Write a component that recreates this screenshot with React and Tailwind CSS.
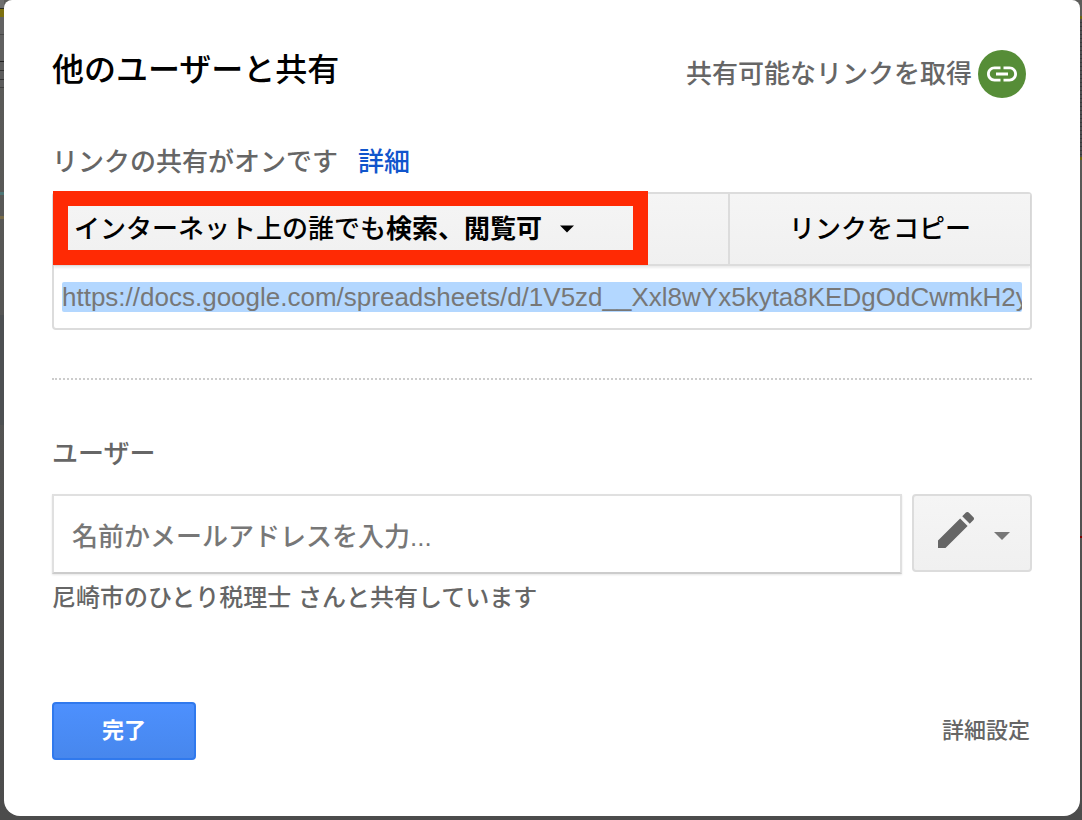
import React, { useState } from "react";

const SHARE_URL = "https://docs.google.com/spreadsheets/d/1V5zd__Xxl8wYx5kyta8KEDgOdCwmkH2yQ7";

const LinkIcon = () => (
  <svg viewBox="0 0 24 24" className="h-9 w-9" fill="currentColor" aria-hidden="true">
    <path d="M3.9 12c0-1.71 1.39-3.1 3.1-3.1h4V7H7c-2.76 0-5 2.24-5 5s2.24 5 5 5h4v-1.9H7c-1.71 0-3.1-1.39-3.1-3.1zM8 13h8v-2H8v2zm9-6h-4v1.9h4c1.71 0 3.1 1.39 3.1 3.1s-1.39 3.1-3.1 3.1h-4V17h4c2.76 0 5-2.24 5-5s-2.24-5-5-5z" />
  </svg>
);

const PencilIcon = () => (
  <svg viewBox="3 3 18 18" className="h-9 w-9" fill="currentColor" aria-hidden="true">
    <path d="M3 17.25V21h3.75L17.81 9.94l-3.75-3.75L3 17.25zM20.71 7.04c.39-.39.39-1.02 0-1.41l-2.34-2.34c-.39-.39-1.02-.39-1.41 0l-1.83 1.83 3.75 3.75 1.83-1.83z" />
  </svg>
);

const Caret = ({ className }) => (
  <svg viewBox="0 0 16 8" className={className} fill="currentColor" aria-hidden="true">
    <path d="M0 0h16L8 8z" />
  </svg>
);

// slivers of the dimmed spreadsheet on both sides of the dialog
const SheetLeft = () => (
  <div className="w-1 shrink-0" aria-hidden="true">
    <div className="h-2 bg-[#6e6e6e]" />
    <div className="h-px bg-[#2a2a22]" />
    <div className="h-2 bg-[#7d7010]" />
    <div className="h-[18px] border-b border-[#484848] bg-[#626262]" />
    <div className="h-[27px] border-b border-[#222] bg-[#606060]" />
    <div className="h-[9px] border-b border-[#333] bg-[#5c5c5c]" />
    <div className="h-[9px] border-b border-[#333] bg-[#5c5c5c]" />
    <div className="h-2 border-b border-[#404040] bg-[#5c5c5c]" />
    <div className="mt-[104px] h-[3px] bg-[#4d7575]" />
    <div className="mt-[21px] h-[3px] bg-[#776a48]" />
    <div className="mt-24 h-[110px] bg-[#4d5052]" />
  </div>
);

const SheetRight = () => (
  <div className="w-[2px] shrink-0" aria-hidden="true">
    <div className="h-4" />
    <div className="h-[3px] bg-[#6b6410]" />
    <div className="h-[138px] bg-[repeating-linear-gradient(to_bottom,#4c4c4e_0px,#4c4c4e_3px,#38383a_3px,#38383a_4px)]" />
    <div className="h-[3px] bg-[#6b6410]" />
    <div className="mt-[376px] h-[2px] bg-[#800000]" />
  </div>
);

const App = () => {
  const [people, setPeople] = useState("");

  return (
    <div
      className="flex min-h-screen items-start bg-linear-to-b from-[#5c5c5a] to-[#4c4c4c] text-[26px] leading-8 font-medium text-[#666]"
      style={{ fontFamily: '"Liberation Sans", "Noto Sans CJK JP", sans-serif' }}
    >
      <SheetLeft />
      <main className="mb-1 min-w-0 flex-1 rounded-t-lg rounded-b-2xl bg-white px-12 pt-[50px] pb-14">
        <header className="flex items-start justify-between">
          <h1 className="text-[32px] leading-10 text-black">他のユーザーと共有</h1>
          <button type="button" className="mr-[6px] flex items-center gap-[6px]">
            共有可能なリンクを取得
            <span className="flex h-12 w-12 items-center justify-center rounded-full bg-[#568d37] text-white">
              <LinkIcon />
            </span>
          </button>
        </header>

        <section className="mt-12">
          <p className="flex gap-5">
            リンクの共有がオンです
            <a href="#details" className="text-[#1155cc]">詳細</a>
          </p>

          <div className="mt-[14px] rounded-[4px] border-2 border-[#dcdcdc]">
            <div className="flex h-[72px] border-b-2 border-[#dcdcdc] bg-linear-to-b from-[#f5f5f5] to-[#f0f0f0] text-black shadow-[0_2px_2px_rgba(0,0,0,0.08)]">
              <button type="button" className="relative flex flex-1 items-center pl-5 text-left">
                <span className="absolute -top-[3px] -left-px h-[74px] w-[595px] border-[15px] border-[#ff2a04]" />
                <span>
                  インターネット上の誰でも<strong>検索、閲覧可</strong>
                </span>
                <Caret className="ml-[18px] h-2 w-[14px]" />
              </button>
              <button type="button" className="w-[302px] border-l-2 border-[#dcdcdc]">
                リンクをコピー
              </button>
            </div>
            <div className="px-2 py-4">
              <input
                type="text"
                readOnly
                aria-label="共有リンク"
                value={SHARE_URL}
                className="block h-[30px] w-full rounded-[2px] bg-[#b3d7ff] text-[#777] outline-none"
              />
            </div>
          </div>
        </section>

        <hr className="mt-12 border-t-2 border-dotted border-[#ccc]" />

        <section className="mt-[58px]">
          <label htmlFor="people" className="block">ユーザー</label>
          <div className="mt-6 flex items-start gap-[10px]">
            <input
              id="people"
              type="text"
              value={people}
              onChange={(e) => setPeople(e.target.value)}
              placeholder="名前かメールアドレスを入力..."
              className="h-20 min-w-0 flex-1 border-2 border-[#e0e0e0] border-b-[#ccc] px-[18px] pt-[6px] shadow-[0_1px_2px_rgba(0,0,0,0.1)] outline-none placeholder:text-[#777]"
            />
            <button
              type="button"
              aria-label="編集権限"
              className="flex h-[78px] w-[120px] items-start gap-5 rounded-[4px] border-2 border-[#dcdcdc] bg-linear-to-b from-[#f5f5f5] to-[#f0f0f0] pt-4 pl-6"
            >
              <PencilIcon />
              <Caret className="mt-5 h-2 w-4 text-[#777]" />
            </button>
          </div>
          <p className="mt-2 text-[24px]">尼崎市のひとり税理士 さんと共有しています</p>
        </section>

        <footer className="mt-[88px] flex items-center justify-between text-[22px]">
          <button
            type="button"
            className="h-[58px] w-36 rounded-[4px] border-2 border-[#3079ed] bg-linear-to-b from-[#4d90fe] to-[#4787ed] font-bold text-white"
          >
            完了
          </button>
          <a href="#settings" className="pr-[2px]">詳細設定</a>
        </footer>
      </main>
      <SheetRight />
    </div>
  );
};

export default App;
